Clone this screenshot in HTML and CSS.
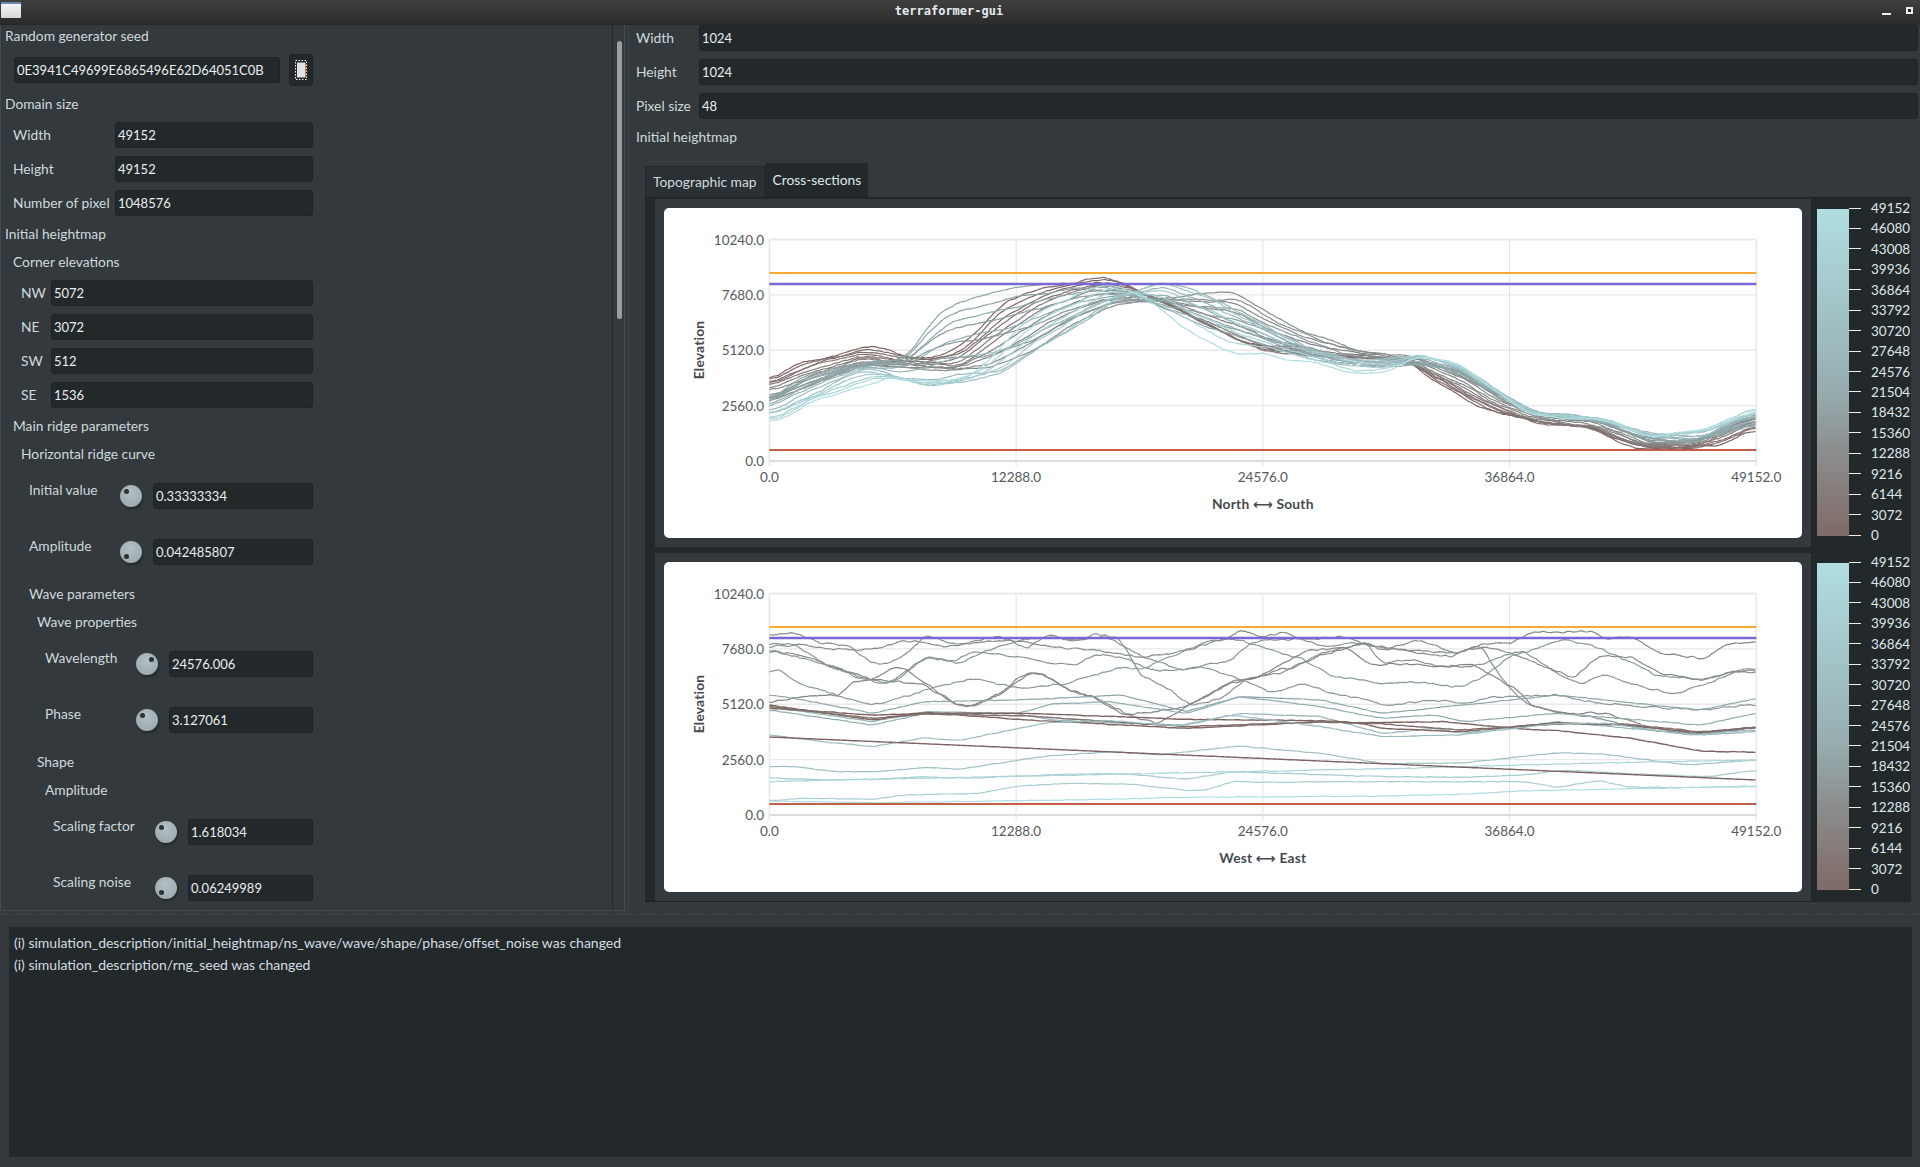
FILE: index.html
```html
<!DOCTYPE html>
<html lang="en">
  <head>
    <meta charset="UTF-8" />
    <title>terraformer-gui</title>
    <link rel="stylesheet" href="styles.css">
  </head>
  <body>
    <header class="titlebar">
      <span class="app-icon"></span>
      <span class="title">terraformer-gui</span>
      <span class="win-min"></span>
      <span class="win-max"></span>
    </header>

    <div class="top">
      <section class="params">
        <div class="params-scroll">
          <div class="params-list">
            <div class="head">Random generator seed</div>
            <div class="seed-row">
              <div class="field">0E3941C49699E6865496E62D64051C0B</div>
              <button class="seed-btn" type="button">
                <svg width="12" height="20" viewBox="0 0 12 20">
                  <rect x="2" y="2.5" width="8" height="15" fill="#dfe3e3" />
                  <rect x="0.5" y="0.5" width="11" height="19" fill="none" stroke="#f2f2f2" stroke-dasharray="1.5 1.5" />
                  <path d="M10.5 3v14" stroke="#c9824f" />
                </svg>
              </button>
            </div>

            <div class="head">Domain size</div>
            <div class="row lv1"><label class="lab-domain">Width</label><div class="field">49152</div></div>
            <div class="row lv1"><label class="lab-domain">Height</label><div class="field">49152</div></div>
            <div class="row lv1"><label class="lab-domain">Number of pixel</label><div class="field">1048576</div></div>

            <div class="head">Initial heightmap</div>
            <div class="head lv1">Corner elevations</div>
            <div class="row lv2"><label class="lab-corner">NW</label><div class="field">5072</div></div>
            <div class="row lv2"><label class="lab-corner">NE</label><div class="field">3072</div></div>
            <div class="row lv2"><label class="lab-corner">SW</label><div class="field">512</div></div>
            <div class="row lv2"><label class="lab-corner">SE</label><div class="field">1536</div></div>

            <div class="head lv1">Main ridge parameters</div>
            <div class="head lv2">Horizontal ridge curve</div>
            <div class="knob-row lv3">
              <label class="knob-label">Initial value</label>
              <span class="knob dot-nw"></span>
              <div class="field">0.33333334</div>
            </div>
            <div class="knob-row lv3">
              <label class="knob-label">Amplitude</label>
              <span class="knob dot-sw"></span>
              <div class="field">0.042485807</div>
            </div>

            <div class="head lv3">Wave parameters</div>
            <div class="head lv4">Wave properties</div>
            <div class="knob-row lv5">
              <label class="knob-label">Wavelength</label>
              <span class="knob dot-ne"></span>
              <div class="field">24576.006</div>
            </div>
            <div class="knob-row lv5">
              <label class="knob-label">Phase</label>
              <span class="knob dot-nw"></span>
              <div class="field">3.127061</div>
            </div>

            <div class="head lv4">Shape</div>
            <div class="head lv5">Amplitude</div>
            <div class="knob-row lv6">
              <label class="knob-label wide">Scaling factor</label>
              <span class="knob dot-nw"></span>
              <div class="field">1.618034</div>
            </div>
            <div class="knob-row lv6">
              <label class="knob-label wide">Scaling noise</label>
              <span class="knob dot-sw"></span>
              <div class="field">0.06249989</div>
            </div>
          </div>
        </div>
        <div class="scrollbar"><span class="thumb"></span></div>
      </section>

      <div class="split-v"></div>

      <section class="view">
        <div class="row"><label class="lab-view">Width</label><div class="field">1024</div></div>
        <div class="row"><label class="lab-view">Height</label><div class="field">1024</div></div>
        <div class="row"><label class="lab-view">Pixel size</label><div class="field">48</div></div>
        <div class="head">Initial heightmap</div>

        <div class="tabs">
          <div class="tab">Topographic map</div>
          <div class="tab active">Cross-sections</div>
        </div>
        <div class="pane">
          <div class="chart-row">
            <div class="card"><svg id="chartNS" width="1138" height="330"></svg></div>
            <div class="legend">
              <span class="bar"></span>
              <div class="scale"></div>
            </div>
          </div>
          <div class="chart-row">
            <div class="card"><svg id="chartWE" width="1138" height="330"></svg></div>
            <div class="legend">
              <span class="bar"></span>
              <div class="scale"></div>
            </div>
          </div>
        </div>
      </section>
    </div>

    <div class="split-h"></div>

    <section class="log">
      <div>(i) simulation_description/initial_heightmap/ns_wave/wave/shape/phase/offset_noise was changed</div>
      <div>(i) simulation_description/rng_seed was changed</div>
    </section>

    <script src="charts.js"></script>
  </body>
</html>
```

FILE: styles.css
```css
* {
  box-sizing: border-box;
}
body {
  margin: 0;
  height: 1167px;
  overflow: hidden;
  display: flex;
  flex-direction: column;
  background: #33393d;
  color: #cfdadc;
  font-family: Lato, "Noto Sans", sans-serif;
  font-size: 13.8px;
}

/* title bar */
.titlebar {
  height: 25px;
  flex: none;
  position: relative;
  background: linear-gradient(#404040, #2b2b2b);
  border-bottom: 1px solid #23282b;
}
.app-icon {
  position: absolute;
  left: 1px;
  top: 2px;
  width: 20px;
  height: 16px;
  background: linear-gradient(#f4f4f4, #d4d8da);
  border-top: 2px solid #6f86b0;
  border-radius: 1px;
}
.title {
  display: block;
  text-align: center;
  padding-right: 22px;
  font: bold 12px/22px "DejaVu Sans Mono", monospace;
  color: #e4ecee;
}
.win-min {
  position: absolute;
  left: 1882px;
  top: 13px;
  width: 9px;
  height: 2px;
  background: #eee;
}
.win-max {
  position: absolute;
  left: 1906px;
  top: 7px;
  width: 7px;
  height: 7px;
  background: #222;
  border: 2px solid #eee;
}

.top {
  display: flex;
  height: 886px;
  flex: none;
}

/* left parameter panel */
.params {
  width: 625px;
  flex: none;
  display: flex;
  border-left: 1px solid #454c50;
  border-bottom: 1px solid #454c50;
}
.params-scroll {
  width: 611px;
  overflow: hidden;
}
.params-list {
  width: 312px;
  padding: 1px 0 0 4px;
  display: flex;
  flex-direction: column;
  gap: 8px;
}
.scrollbar {
  width: 13px;
  padding-top: 16px;
  padding-left: 4px;
  border-left: 1px solid #23282b;
  border-right: 1px solid #454c50;
}
.thumb {
  display: block;
  width: 5px;
  height: 278px;
  background: #9a9fa1;
  border-radius: 3px;
}
.head {
  height: 20px;
  line-height: 20px;
}
.lv1 { padding-left: 8px; }
.lv2 { padding-left: 16px; }
.lv3 { padding-left: 24px; }
.lv4 { padding-left: 32px; }
.lv5 { padding-left: 40px; }
.lv6 { padding-left: 48px; }

.row {
  display: flex;
  align-items: center;
  height: 26px;
}
.row label {
  padding-bottom: 2px;
}
.field {
  flex: 1;
  height: 26px;
  line-height: 24px;
  padding: 0 2px;
  background: #23282b;
  border: 1px solid #1f2326;
  border-radius: 3px;
  color: #e8eef0;
  font-size: 13px;
  white-space: nowrap;
}
.lab-domain { width: 102px; flex: none; }
.lab-corner { width: 30px; flex: none; }
.lab-view { width: 63px; flex: none; }

.seed-row {
  display: flex;
  align-items: center;
  gap: 9px;
  height: 32px;
  padding-left: 9px;
}
.seed-btn {
  width: 24px;
  height: 32px;
  padding: 0;
  display: flex;
  align-items: center;
  justify-content: center;
  background: #23282b;
  border: 1px solid #1f2326;
  border-radius: 3px;
}

.knob-row {
  display: flex;
  align-items: center;
  height: 48px;
}
.knob-label {
  width: 91px;
  flex: none;
  align-self: flex-start;
  margin-top: 8px;
  line-height: 20px;
}
.knob-label.wide {
  width: 102px;
}
.knob {
  width: 22px;
  height: 22px;
  flex: none;
  margin-right: 11px;
  position: relative;
  border-radius: 50%;
  background: radial-gradient(circle at 50% 35%, #b4c1c4, #95a4a8);
  box-shadow: 1px 2px 2px #23282b;
}
.knob::after {
  content: "";
  position: absolute;
  width: 5px;
  height: 5px;
  border-radius: 50%;
  background: #2b3134;
}
.dot-nw::after { left: 4px; top: 4px; }
.dot-sw::after { left: 4px; top: 13px; }
.dot-ne::after { left: 13px; top: 4px; }

/* splitters */
.split-v {
  width: 8px;
  flex: none;
  background-image: radial-gradient(#50575b 0.8px, transparent 1px);
  background-size: 3px 3px;
  background-repeat: repeat-y;
  background-position: 2px 0;
}
.split-h {
  height: 15px;
  flex: none;
  background-image: radial-gradient(#50575b 0.8px, transparent 1px);
  background-size: 3px 3px;
  background-repeat: repeat-x;
  background-position: 0 2px;
}

/* right side */
.view {
  flex: 1;
  min-width: 0;
  padding: 0 2px 0 3px;
  display: flex;
  flex-direction: column;
  gap: 8px;
}
.view > .head {
  margin-bottom: 8px;
}
.tabs {
  display: flex;
  align-items: flex-end;
  height: 34px;
  padding-left: 9px;
  margin-bottom: -8px;
}
.tab {
  height: 31px;
  padding: 0 7px;
  line-height: 29px;
  background: #2b3034;
  border: 1px solid #23282b;
  border-bottom: 0;
  border-radius: 3px 3px 0 0;
}
.tab.active {
  height: 34px;
  padding: 0 6px 0 7px;
  line-height: 32px;
  background: #23282b;
  color: #dfe8ea;
}
.pane {
  margin-left: 9px;
  width: 1266px;
  height: 705px;
  display: flex;
  flex-direction: column;
  gap: 6px;
  background: #23282b;
  border-top: 1px solid #1f2326;
  border-bottom: 2px solid #1f2326;
  padding-top: 1px;
  padding-left: 10px;
}
.chart-row {
  display: flex;
  height: 348px;
  background: #33393d;
}
.card {
  width: 1138px;
  height: 330px;
  margin: 9px;
  background: #fff;
  border-radius: 5px;
  flex: none;
}
.card svg {
  display: block;
}
.legend {
  width: 100px;
  flex: none;
  display: flex;
  background: #23282b;
  padding-left: 6px;
}
.bar {
  width: 32px;
  height: 327px;
  margin-top: 10px;
  flex: none;
  background: linear-gradient(#b0dde1, #a2c4c7 30%, #97adb0 55%, #8b8c8c 75%, #7f6a67);
}
.scale {
  height: 347px;
  margin-top: -1px;
  display: flex;
  flex-direction: column;
  justify-content: space-between;
}
.scale div {
  display: flex;
  align-items: center;
  height: 20px;
  gap: 10px;
  color: #dfe7e9;
  font-size: 13.5px;
}
.scale i {
  width: 12px;
  height: 1px;
  background: #eee;
}

/* log */
.log {
  flex: 1;
  margin: 1px 8px 10px 9px;
  padding: 5px 5px;
  background: #23282b;
  font-size: 14px;
  line-height: 22px;
  color: #d3dde0;
}

/* chart texts */
.tick-text {
  font: 13.5px Lato, sans-serif;
  fill: #555a5e;
}
.axis-title {
  font: bold 13.8px Lato, "DejaVu Sans", sans-serif;
  fill: #454a4e;
  letter-spacing: 0.2px;
}
```

FILE: charts.js
```js
const SVG_NS = "http://www.w3.org/2000/svg";
const PLOT = { left: 105.4, right: 1092.3, top: 31.5, bottom: 253 };
const LEVELS = { orange: 65, purple: 76, red: 242 };

function el(parent, name, attrs, text) {
  const node = document.createElementNS(SVG_NS, name);
  Object.keys(attrs).forEach((k) => node.setAttribute(k, attrs[k]));
  if (text) node.textContent = text;
  parent.appendChild(node);
  return node;
}

function parse(str) {
  return str.trim().split(/\s+/).map((p) => p.split(",").map(Number));
}

// colour along the legend, 0 = low (brown), 1 = high (pale blue)
function ramp(t) {
  const stops = [
    [125, 100, 98],
    [134, 136, 136],
    [142, 170, 173],
    [176, 221, 225],
  ];
  const p = Math.min(t, 0.999) * 3;
  const i = Math.floor(p);
  const f = p - i;
  const c = stops[i].map((v, k) => Math.round(v + (stops[i + 1][k] - v) * f));
  return "rgb(" + c.join(",") + ")";
}

function sampleLine(points) {
  const out = [];
  let j = 0;
  for (let x = PLOT.left; x <= PLOT.right + 0.01; x += 2) {
    while (j < points.length - 2 && points[j + 1][0] < x) j++;
    const a = points[j];
    const b = points[j + 1];
    const f = Math.max(0, Math.min(1, (x - a[0]) / (b[0] - a[0])));
    out.push(a[1] + (b[1] - a[1]) * f);
  }
  return out;
}

function smooth(ys, n) {
  return ys.map((_, i) => {
    let sum = 0;
    let count = 0;
    for (let k = -n; k <= n; k++) {
      if (ys[i + k] !== undefined) {
        sum += ys[i + k];
        count++;
      }
    }
    return sum / count;
  });
}

function noise(seed, amp) {
  let s = seed * 7919 + 13;
  return () => {
    s = (s * 16807) % 2147483647;
    return ((s / 2147483647) * 2 - 1) * amp;
  };
}

function drawCurve(svg, ys, color, width) {
  const pts = ys.map((y, i) => (PLOT.left + i * 2).toFixed(1) + "," + y.toFixed(1));
  el(svg, "polyline", {
    points: pts.join(" "),
    fill: "none",
    stroke: color,
    "stroke-width": width,
    "stroke-linejoin": "round",
  });
}

function drawFrame(svg, xTitle) {
  const xs = ["0.0", "12288.0", "24576.0", "36864.0", "49152.0"];
  const ys = ["10240.0", "7680.0", "5120.0", "2560.0", "0.0"];
  const w = PLOT.right - PLOT.left;
  const h = PLOT.bottom - PLOT.top;

  ys.forEach((label, i) => {
    const y = PLOT.top + (h * i) / 4;
    el(svg, "line", { x1: PLOT.left, x2: PLOT.right, y1: y, y2: y, stroke: i === 4 ? "#dcdcdc" : "#e9e9e9", "stroke-width": i === 0 || i === 4 ? 2 : 1.4 });
    el(svg, "text", { x: 100, y: y + 5, "text-anchor": "end", class: "tick-text" }, label);
  });
  xs.forEach((label, i) => {
    const x = PLOT.left + (w * i) / 4;
    el(svg, "line", { x1: x, x2: x, y1: PLOT.top, y2: PLOT.bottom + 5, stroke: i === 0 || i === 4 ? "#e8e8e8" : "#e2e2e2", "stroke-width": i === 0 || i === 4 ? 1.6 : 1 });
    el(svg, "text", { x: x, y: 274, "text-anchor": "middle", class: "tick-text" }, label);
  });

  el(svg, "text", { x: 598.8, y: 301, "text-anchor": "middle", class: "axis-title" }, xTitle);
  el(svg, "text", { x: -142, y: 40, "text-anchor": "middle", transform: "rotate(-90)", class: "axis-title" }, "Elevation");
}

function drawLevels(svg) {
  const line = (y, color, width, opacity) =>
    el(svg, "line", { x1: PLOT.left, x2: PLOT.right, y1: y, y2: y, stroke: color, "stroke-width": width, opacity: opacity });
  line(LEVELS.orange, "#f8aa33", 2, 1);
  line(LEVELS.purple, "#7a68d6", 4, 0.25);
  line(LEVELS.purple, "#7a68d6", 2, 1);
  line(LEVELS.red, "#c55d47", 2, 1);
}

/* ---- North / South ---- */
const GUIDES_NS = [
  "105,174 127,159 147,153 172,146 200,139 217,139 241,149 270,149 294,139 315,122 335,99 364,84 405,75 441,69 462,75 478,85 507,97 547,119 576,134 616,139 645,139 669,149 706,150 747,152 763,169 779,177 808,195 832,204 877,215 926,219 951,232 975,240 1024,240 1057,237 1092,220",
  "105,180 147,162 200,148 241,155 294,158 335,128 380,96 430,78 480,84 540,115 600,143 650,150 700,148 750,156 790,175 830,198 870,212 930,220 980,238 1030,238 1092,212",
  "105,195 200,157 262,162 327,162 375,142 408,118 450,98 522,87 572,82 604,102 640,122 700,144 750,148 800,168 840,192 880,208 935,214 985,235 1030,232 1092,205",
  "105,190 147,165 200,155 241,150 270,109 286,94 327,80 388,72 441,75 486,95 547,122 616,142 649,152 698,160 740,158 790,160 830,185 870,205 930,212 980,228 1030,235 1092,215",
  "105,205 200,160 262,178 340,170 400,130 450,95 500,69 547,85 616,125 650,142 700,152 755,146 800,162 840,186 875,205 935,210 985,226 1040,226 1092,205",
  "105,217 127,207 151,192 172,187 209,175 229,169 262,174 294,172 315,162 335,142 356,119 384,99 409,89 445,74 478,89 507,109 539,132 568,145 616,149 649,155 698,167 722,165 755,148 792,154 828,180 861,205 902,209 943,212 983,229 1040,222 1092,199",
];

function drawNorthSouth() {
  const svg = document.getElementById("chartNS");
  drawFrame(svg, "North \u27F7 South");

  const guides = GUIDES_NS.map((g) => sampleLine(parse(g)));
  const count = 24;
  for (let i = 0; i < count; i++) {
    const t = i / (count - 1);
    const p = t * (guides.length - 1);
    const g = Math.min(Math.floor(p), guides.length - 2);
    const f = p - g;
    const rnd = noise(i + 1, 2.4);
    const wobble = smooth(guides[g].map(() => rnd()), 6);
    const ys = smooth(guides[g].map((v, k) => v + (guides[g + 1][k] - v) * f), 5).map((v, k) => v + wobble[k] * 1.8);
    drawCurve(svg, ys, ramp(t), 1.2);
  }
  drawLevels(svg);
}

/* ---- West / East ---- */
// l: points read off the left half of the plot, r: the right half. t: legend colour
const CURVES_WE = [
  { t: 0.42, l: "268,255 330,250 400,280 460,285 520,340 560,342 600,315 650,258 730,285 830,258 900,295 950,252 1010,275 1070,250 1130,270 1180,380 1240,410 1300,470 1380,440 1440,385 1520,370", r: "100,310 200,280 260,300 340,268 430,312 490,285 540,380 600,460 680,485 800,510 900,540 1030,550 1167,530" },
  { t: 0.45, l: "268,285 330,283 400,340 500,385 560,400 600,365 650,320 740,340 790,305 880,270 950,260 1010,270 1100,262 1140,290 1180,320 1280,360 1400,330 1450,275", r: "50,265 110,290 210,275 250,340 320,330 400,350 450,350 500,340 590,300 680,370 740,405 790,372 860,400 960,432 1050,400 1130,360 1167,358" },
  { t: 0.33, l: "268,303 340,315 430,350 520,390 640,400 720,460 760,470 840,430 900,370 940,372 1000,420 1060,440 1130,490 1220,520 1290,470 1400,400 1470,380 1530,350", r: "0,370 80,325 200,280 320,305 420,320 500,280 560,280 620,245 680,245 760,245 800,265 860,258 930,310 1040,325 1090,285 1167,275" },
  { t: 0.5, l: "268,365 300,362 340,400 430,435 520,465 600,440 660,415 770,385 880,415 1000,400 1130,350 1180,360 1250,320 1350,270 1420,270", r: "60,330 130,380 210,390 250,400 330,395 440,412 500,380 560,320 590,310 690,270 760,285 830,320 920,375 1030,390 1110,365 1167,368" },
  { t: 0.3, l: "268,458 350,440 440,435 470,395 520,392 570,352 600,352 650,400 720,460 760,470 840,425 890,372 940,372 1000,420 1060,440 1150,495 1290,470 1400,395 1470,380", r: "60,305 160,290 220,345 300,340 400,350 470,340 510,370 580,420 620,470 700,490 800,490 900,530 1030,555 1167,532" },
  { t: 0.38, l: "268,290 350,285 450,300 520,300 600,270 700,290 790,275 880,270 950,290 1060,300 1180,320 1280,305 1400,258 1425,238 1470,262 1535,245", r: "50,270 150,260 250,295 330,300 420,310 500,290 560,305 640,345 720,385 780,320 860,320 930,370 1040,390 1110,365 1167,360" },
  { t: 0.48, l: "268,300 370,330 490,385 540,400 580,390 650,322 720,335 760,305 880,320 950,340 1020,345 1070,312 1140,325 1200,360 1270,360 1330,352 1420,385 1500,430", r: "50,400 130,430 210,450 260,465 400,450 450,465 520,440 680,435 780,460 900,470 1030,480 1167,463" },
  { t: 0.62, l: "268,435 330,445 520,490 650,455 880,450 1130,435 1290,485 1420,440", r: "100,450 250,490 450,465 680,435 1030,480 1167,445" },
  { t: 0.68, l: "268,480 520,525 650,490 880,490 960,462 1100,455 1290,490 1420,440", r: "100,470 250,505 380,495 450,515 680,490 1030,525 1167,490" },
  { t: 0.74, l: "268,470 520,515 650,485 870,490 960,510 1140,520 1290,525 1420,490", r: "100,500 250,550 380,535 450,550 680,515 1030,555 1167,545" },
  { t: 0.02, l: "268,465 520,510 650,488 900,510 1290,535", r: "100,516 200,520 250,535 440,545 680,518 840,525 1030,548 1167,530" },
  { t: 0.0, l: "268,475 520,495 650,490 900,490 1290,508", r: "100,512 200,518 400,515 600,538 680,542 860,565 1030,603 1167,607" },
  { t: 0.1, l: "268,470 520,505 650,492 900,498 1290,530", r: "100,515 250,522 440,540 680,522 840,522 1030,545 1167,533" },
  { t: 0.78, l: "268,555 400,575 520,590 650,563 730,572 880,535 950,518 1100,512 1270,528 1400,495", r: "100,530 250,560 440,555 680,520 800,520 1000,555 1167,540" },
  { t: 0.82, l: "268,650 330,650 430,665 520,665 650,652 730,658 880,630 950,618 1100,605 1220,615 1420,588", r: "100,610 250,640 440,640 680,608 790,612 1000,645 1167,630" },
  { t: 0.88, l: "268,683 400,690 520,688 650,680 750,685 1000,672 1140,672 1290,688 1400,665", r: "250,680 450,682 600,675 700,660 800,668 1050,680 1167,660" },
  { t: 0.95, l: "268,695 420,690 650,685 900,678", r: "300,655 600,645 800,638 1167,630" },
  { t: 0.9, l: "268,752 350,745 520,748 600,735 780,730 880,708 1000,700 1150,702 1300,722 1340,720 1400,695", r: "0,697 200,695 400,695 600,695 680,712 780,692 860,712 1050,712 1167,710" },
  { t: 1.0, l: "268,753 520,758 1000,750 1290,742", r: "250,738 450,733 600,722 800,718 1167,708" },
];

function drawWestEast() {
  const svg = document.getElementById("chartWE");
  drawFrame(svg, "West \u27F7 East");

  CURVES_WE.forEach((c, i) => {
    const left = parse(c.l).map((p) => [p[0] / 2.45 - 4, p[1] / 3 - 12]);
    const right = parse(c.r).map((p) => [p[0] / 2.45 + 616, p[1] / 3 - 12]);
    const rnd = noise(i + 40, c.t < 0.55 && c.t > 0.25 ? 1.5 : 0.5);
    const ys = smooth(sampleLine(left.concat(right)), 2).map((v) => v + rnd());
    drawCurve(svg, smooth(ys, 1), ramp(c.t), c.t < 0.15 ? 1.4 : 1.2);
  });

  // the straight cut along the domain
  drawCurve(svg, sampleLine([[PLOT.left, 175], [PLOT.right, 218]]), ramp(0), 1.4);
  drawLevels(svg);
}

/* ---- legends ---- */
function fillLegends() {
  document.querySelectorAll(".scale").forEach((scale) => {
    for (let v = 49152; v >= 0; v -= 3072) {
      const row = document.createElement("div");
      row.innerHTML = "<i></i><span>" + v + "</span>";
      scale.appendChild(row);
    }
  });
}

drawNorthSouth();
drawWestEast();
fillLegends();
```
